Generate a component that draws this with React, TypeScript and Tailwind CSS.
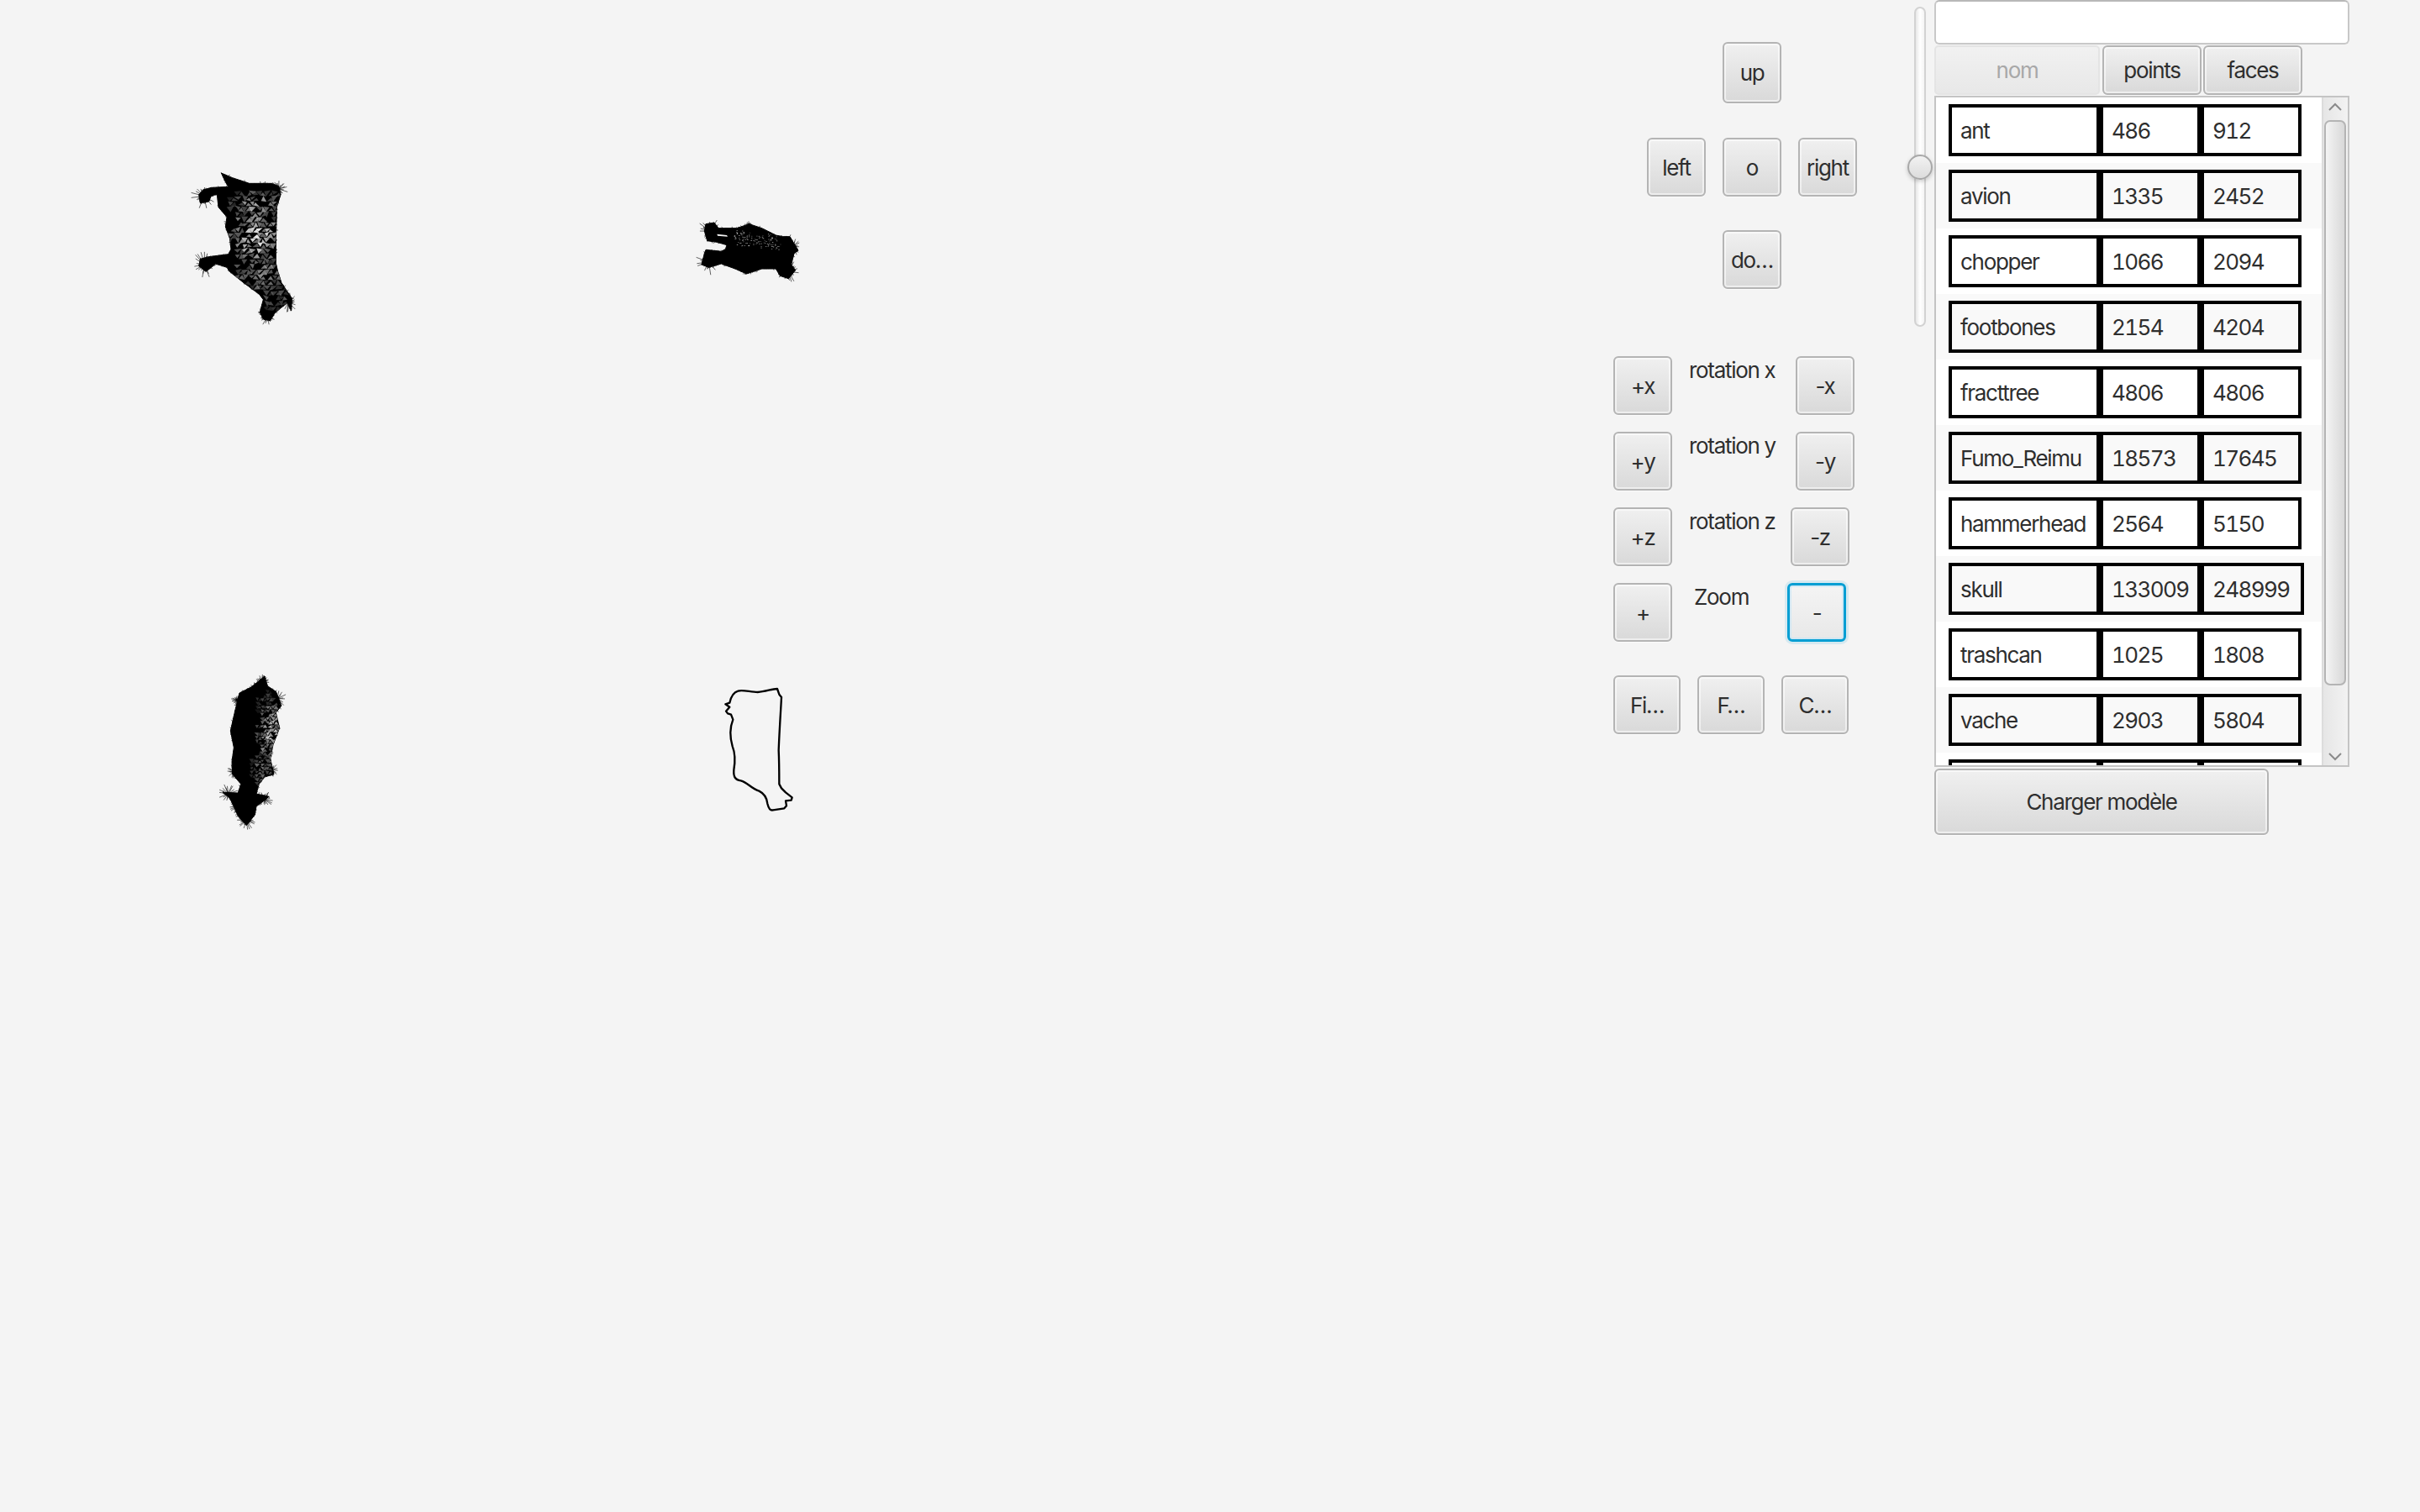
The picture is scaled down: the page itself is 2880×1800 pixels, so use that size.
import React from "react";

type P = [number, number];
type Light = { cx: number; cy: number; rx: number; ry: number; max: number };

function rng(seed: number) {
  let s = seed;
  return () => {
    s = (s * 1664525 + 1013904223) % 4294967296;
    return s / 4294967296;
  };
}

function furPath(pts: P[], fur: [number, number, number][], r: () => number) {
  const hairs: string[] = [];
  for (const [cx, cy, rad] of fur) {
    const n = 22;
    for (let i = 0; i < n; i++) {
      const t = (i / n) * Math.PI * 2 + r() * 0.3;
      const len = rad * (0.65 + r() * 0.75);
      hairs.push(`M${cx},${cy}L${(cx + Math.cos(t) * len).toFixed(1)},${(cy + Math.sin(t) * len).toFixed(1)}`);
    }
  }
  for (let i = 0; i < pts.length; i++) {
    const a = pts[i];
    const b = pts[(i + 1) % pts.length];
    const L = Math.hypot(b[0] - a[0], b[1] - a[1]);
    const steps = Math.max(1, Math.floor(L / 8));
    for (let k = 0; k < steps; k++) {
      const u = k / steps;
      const x = a[0] + (b[0] - a[0]) * u;
      const y = a[1] + (b[1] - a[1]) * u;
      const t = r() * Math.PI * 2;
      const len = 2 + r() * 6;
      hairs.push(`M${x.toFixed(1)},${y.toFixed(1)}L${(x + Math.cos(t) * len).toFixed(1)},${(y + Math.sin(t) * len).toFixed(1)}`);
    }
  }
  return hairs.join("");
}

function Mesh({
  id, w, h, pts, fur, lights, cell, seed,
}: { id: string; w: number; h: number; pts: P[]; fur: [number, number, number][]; lights: Light[]; cell: number; seed: number }) {
  const r = rng(seed);
  const poly = pts.map((p) => p.join(",")).join(" ");
  const tris: { d: string; o: number }[] = [];
  for (let x = 0; x < w; x += cell) {
    for (let y = 0; y < h; y += cell * 0.72) {
      let a = 0;
      for (const l of lights) {
        const dx = (x - l.cx) / l.rx;
        const dy = (y - l.cy) / l.ry;
        const d = dx * dx + dy * dy;
        if (d < 1) a = Math.max(a, l.max * (1 - d * 0.6));
      }
      if (a <= 0.02) continue;
      const j = () => (r() - 0.5) * cell * 0.3;
      const q: P[] = [
        [x + j(), y + j()],
        [x + cell * 0.82 + j(), y + j()],
        [x + cell * 0.4 + j(), y + cell * 0.6 + j()],
      ];
      if (r() < 0.8) tris.push({ d: q.map((p) => p.join(",")).join(" "), o: a * (0.4 + r() * 0.6) });
      const q2: P[] = [
        [x + cell * 0.95 + j(), y + cell * 0.08 + j()],
        [x + cell * 1.35 + j(), y + cell * 0.62 + j()],
        [x + cell * 0.55 + j(), y + cell * 0.62 + j()],
      ];
      if (r() < 0.8) tris.push({ d: q2.map((p) => p.join(",")).join(" "), o: a * (0.4 + r() * 0.6) });
    }
  }
  return (
    <svg width={w / 3} height={h / 3} viewBox={`0 0 ${w} ${h}`} className="block">
      <defs>
        <clipPath id={id}>
          <polygon points={poly} />
        </clipPath>
      </defs>
      <path d={furPath(pts, fur, r)} stroke="#000" strokeWidth="1.8" fill="none" />
      <polygon points={poly} fill="#000" stroke="#000" strokeWidth="3" strokeLinejoin="round" />
      <g clipPath={`url(#${id})`}>
        {tris.map((t, i) => (
          <polygon key={i} points={t.d} fill="#f4f4f4" opacity={t.o} />
        ))}
      </g>
    </svg>
  );
}

function Cow1() {
  const pts: P[] = [[160,48],[200,65],[260,85],[340,85],[365,95],[372,125],[358,170],[355,300],[355,370],[362,400],[375,440],[395,470],[412,495],[410,540],[395,510],[350,550],[335,575],[310,570],[298,545],[310,500],[295,480],[240,440],[190,400],[180,385],[140,372],[125,385],[105,400],[80,380],[85,355],[115,347],[185,338],[195,320],[190,280],[175,240],[180,205],[150,170],[145,125],[125,128],[115,150],[85,155],[80,125],[95,108],[125,100],[185,97],[175,80]];
  return (
    <Mesh id="c1" w={480} h={600} pts={pts} seed={7} cell={26}
      fur={[[98,130,34],[100,375,34],[365,105,24],[400,510,26],[325,560,26]]}
      lights={[
        { cx: 270, cy: 265, rx: 92, ry: 100, max: 1 },
        { cx: 270, cy: 150, rx: 95, ry: 55, max: 0.7 },
        { cx: 280, cy: 400, rx: 95, ry: 65, max: 0.65 },
        { cx: 340, cy: 490, rx: 48, ry: 50, max: 0.45 },
      ]} />
  );
}

function Cow2() {
  const pts: P[] = [[90,80],[120,75],[135,95],[200,95],[245,80],[290,95],[340,120],[365,125],[390,125],[405,150],[420,175],[405,185],[395,225],[410,245],[385,275],[355,265],[340,240],[290,240],[235,258],[195,240],[145,222],[100,235],[75,225],[85,185],[90,172],[145,178],[160,170],[165,155],[130,145],[95,140],[85,105]];
  const r = rng(3);
  const dots: [number, number, number][] = [];
  for (let i = 0; i < 130; i++) {
    const x = 190 + r() * 165;
    const y = 100 + r() * 55 + (x - 190) * 0.1;
    dots.push([x, y, 0.25 + r() * 0.5]);
  }
  return (
    <svg width={160} height={110} viewBox="0 0 480 330" className="block">
      <path d={furPath(pts, [[105,105,34],[100,215,34],[400,160,28],[385,250,30],[245,85,12]], r)} stroke="#000" strokeWidth="1.8" fill="none" />
      <polygon points={pts.map((p) => p.join(",")).join(" ")} fill="#000" stroke="#000" strokeWidth="3" strokeLinejoin="round" />
      <polygon points="130,116 165,120 168,125 132,122" fill="#f4f4f4" />
      {dots.map((d, i) => (
        <rect key={i} x={d[0]} y={d[1]} width="4" height="2.5" fill="#f4f4f4" opacity={d[2]} />
      ))}
    </svg>
  );
}

function Cow3() {
  const pts: P[] = [[195,70],[225,45],[235,80],[265,100],[285,150],[265,175],[278,230],[255,290],[245,340],[258,395],[225,405],[205,430],[195,465],[240,475],[215,495],[195,510],[190,540],[160,578],[130,545],[115,510],[100,480],[75,460],[130,462],[140,430],[110,395],[108,350],[115,300],[103,240],[120,165],[135,105],[175,85]];
  return (
    <Mesh id="c3" w={390} h={600} pts={pts} seed={11} cell={19}
      fur={[[215,65,22],[270,125,24],[125,130,16],[250,380,20],[115,385,18],[95,465,26],[160,560,26],[225,485,22],[125,510,18]]}
      lights={[
        { cx: 236, cy: 250, rx: 48, ry: 125, max: 0.85 },
        { cx: 225, cy: 140, rx: 42, ry: 45, max: 0.4 },
        { cx: 205, cy: 370, rx: 38, ry: 70, max: 0.5 },
      ]} />
  );
}

function Cow4() {
  return (
    <svg width={130} height={180} viewBox="0 0 390 540" className="block">
      <path
        d="M255,60 C235,60 215,70 185,72 C160,72 130,62 115,68 C100,72 90,88 85,110 L70,115 L85,125 L72,140 L78,148 L90,152 L97,170 C85,200 85,230 95,265 C105,290 105,320 100,350 C98,375 105,385 125,388 C150,395 160,415 190,425 C210,435 218,450 220,470 C225,490 230,495 240,493 L280,487 L288,478 L285,460 L305,458 L308,448 L285,430 L270,415 L262,400 C262,370 262,320 260,280 C262,220 268,130 270,90 L262,80 Z"
        fill="none" stroke="#000" strokeWidth="7" strokeLinejoin="round" />
    </svg>
  );
}

const btn =
  "flex items-center justify-center shrink-0 rounded-[6px] border-2 border-[#b4b4b4] bg-gradient-to-b from-[#f0f0f0] to-[#d9d9d9] shadow-[inset_0_0_0_2px_rgba(255,255,255,0.55),0_1px_0_#fbfbfb] text-[#2e2e2e]";

function Btn({ label, cls }: { label: string; cls: string }) {
  return <div className={`${btn} ${cls}`}>{label}</div>;
}

const rowsData: [string, string, string][] = [
  ["ant", "486", "912"],
  ["avion", "1335", "2452"],
  ["chopper", "1066", "2094"],
  ["footbones", "2154", "4204"],
  ["fracttree", "4806", "4806"],
  ["Fumo_Reimu", "18573", "17645"],
  ["hammerhead", "2564", "5150"],
  ["skull", "133009", "248999"],
  ["trashcan", "1025", "1808"],
  ["vache", "2903", "5804"],
  ["", "", ""],
];

function Row({ d, i }: { d: [string, string, string]; i: number }) {
  const bg = i % 2 === 0 ? "bg-white" : "bg-[#f9f9f9]";
  const cell = "h-[62px] border-[4px] border-black flex items-center pl-[10px] shrink-0 text-[#2e2e2e] whitespace-nowrap";
  return (
    <div className={`${bg} h-[78px] shrink-0 pt-[8px] pl-[15px] flex`}>
      <div className={`${cell} w-[180px]`}>{d[0]}</div>
      <div className={`${cell} w-[120px] tabular-nums tracking-[-1.6px]`}>{d[1]}</div>
      <div className={`${cell} tabular-nums tracking-[-1.6px] ${d[0] === "skull" ? "w-[123px]" : "w-[120px]"}`}>{d[2]}</div>
    </div>
  );
}

function RotRow({ plus, label, minus, lcls, top }: { plus: string; label: string; minus: string; lcls: string; top: string }) {
  return (
    <div className={`flex ${top}`}>
      <Btn label={plus} cls="w-[70px] h-[70px]" />
      <div className={`${lcls} pt-[1px] leading-[32px] text-[#2e2e2e] whitespace-nowrap`}>{label}</div>
      <Btn label={minus} cls="w-[70px] h-[70px]" />
    </div>
  );
}

export default function App() {
  return (
    <div
      className="flex w-[2880px] h-[1800px] overflow-hidden bg-[#f4f4f4] text-[26px] tracking-[-1.3px]"
      style={{ fontFamily: '"Inter", "Liberation Sans", sans-serif' }}
    >
      {/* canvases */}
      <div className="w-[1920px] shrink-0 grid grid-cols-[600px_600px] grid-rows-[600px_600px]">
        <div className="pl-[210px] pt-[190px]"><Cow1 /></div>
        <div className="pl-[210px] pt-[240px]"><Cow2 /></div>
        <div className="pl-[240px] pt-[190px]"><Cow3 /></div>
        <div className="pl-[240px] pt-[200px]"><Cow4 /></div>
      </div>

      {/* controls */}
      <div className="w-[358px] shrink-0 flex flex-col">
        <div className="mt-[50px] ml-[130px]"><Btn label="up" cls="w-[70px] h-[73px]" /></div>
        <div className="mt-[41px] ml-[40px] flex gap-[20px]">
          <Btn label="left" cls="w-[70px] h-[70px]" />
          <Btn label="o" cls="w-[70px] h-[70px]" />
          <Btn label="right" cls="w-[70px] h-[70px]" />
        </div>
        <div className="mt-[40px] ml-[130px]"><Btn label="do…" cls="w-[70px] h-[70px]" /></div>

        <RotRow top="mt-[80px]" plus="+x" label="rotation x" minus="-x" lcls="w-[147px] pl-[20px]" />
        <RotRow top="mt-[20px]" plus="+y" label="rotation y" minus="-y" lcls="w-[147px] pl-[20px]" />
        <RotRow top="mt-[20px]" plus="+z" label="rotation z" minus="-z" lcls="w-[141px] pl-[20px]" />
        <div className="flex mt-[20px]">
          <Btn label="+" cls="w-[70px] h-[70px]" />
          <div className="w-[137px] pl-[26px] pt-[1px] leading-[32px] text-[#2e2e2e]">Zoom</div>
          <div className="w-[70px] h-[70px] flex items-center justify-center rounded-[6px] border-[3px] border-[#039ed3] bg-gradient-to-b from-[#f4f4f4] to-[#e8e8e8] shadow-[inset_0_0_0_2px_rgba(200,230,245,0.7),0_0_0_3px_rgba(3,158,211,0.12)] text-[#2e2e2e]">-</div>
        </div>
        <div className="flex gap-[20px] mt-[40px]">
          <Btn label="Fi…" cls="w-[80px] h-[70px]" />
          <Btn label="F…" cls="w-[80px] h-[70px]" />
          <Btn label="C…" cls="w-[80px] h-[70px]" />
        </div>
      </div>

      {/* slider */}
      <div className="w-[24px] shrink-0 pt-[8px]">
        <div className="relative w-[14px] h-[381px] rounded-[7px] border-2 border-[#d2d2d2] bg-gradient-to-r from-[#e8e8e8] via-white to-[#f4f4f4]">
          <div className="absolute left-[-10px] top-[174px] w-[30px] h-[30px] rounded-full border-2 border-[#a8a8a8] bg-gradient-to-b from-[#f2f2f2] to-[#dcdcdc] shadow-[0_2px_5px_rgba(0,0,0,0.2)]" />
        </div>
      </div>

      {/* table */}
      <div className="w-[494px] shrink-0 flex flex-col">
        <div className="h-[53px] shrink-0 rounded-[6px] bg-white border-2 border-[#c8c8c8] border-t-[#b8b8b8]" />
        <div className="mt-[1px] h-[60px] shrink-0 flex text-[#2e2e2e]">
          <div className="w-[197px] h-[59px] rounded-[5px] border-2 border-[#e4e4e4] bg-gradient-to-b from-[#f1f1f1] to-[#e8e8e8] text-[#a8a8a8] flex items-center justify-center">nom</div>
          <Btn label="points" cls="w-[118px] h-[59px] ml-[3px]" />
          <Btn label="faces" cls="w-[118px] h-[59px] ml-[2px]" />
        </div>
        <div className="h-[799px] shrink-0 border-2 border-[#c4c4c4] flex overflow-hidden">
          <div className="flex-1 flex flex-col overflow-hidden">
            {rowsData.map((d, i) => <Row key={i} d={d} i={i} />)}
          </div>
          <div className="relative w-[31px] shrink-0 border-l-2 border-[#dcdcdc] bg-gradient-to-r from-[#e6e6e6] to-[#f2f2f2]">
            <svg className="absolute left-[5px] top-[5px]" width="18" height="12" viewBox="0 0 18 12"><path d="M2,10 L9,3 L16,10" fill="none" stroke="#8a8a8a" strokeWidth="2" /></svg>
            <div className="absolute left-[1px] top-[27px] w-[26px] h-[673px] rounded-[7px] border-2 border-[#b4b4b4] bg-gradient-to-r from-[#f4f4f4] to-[#d8d8d8]" />
            <svg className="absolute left-[5px] top-[779px]" width="18" height="12" viewBox="0 0 18 12"><path d="M2,2 L9,9 L16,2" fill="none" stroke="#8a8a8a" strokeWidth="2" /></svg>
          </div>
        </div>
        <Btn label="Charger modèle" cls="w-[398px] h-[79px] mt-[2px]" />
      </div>
    </div>
  );
}
